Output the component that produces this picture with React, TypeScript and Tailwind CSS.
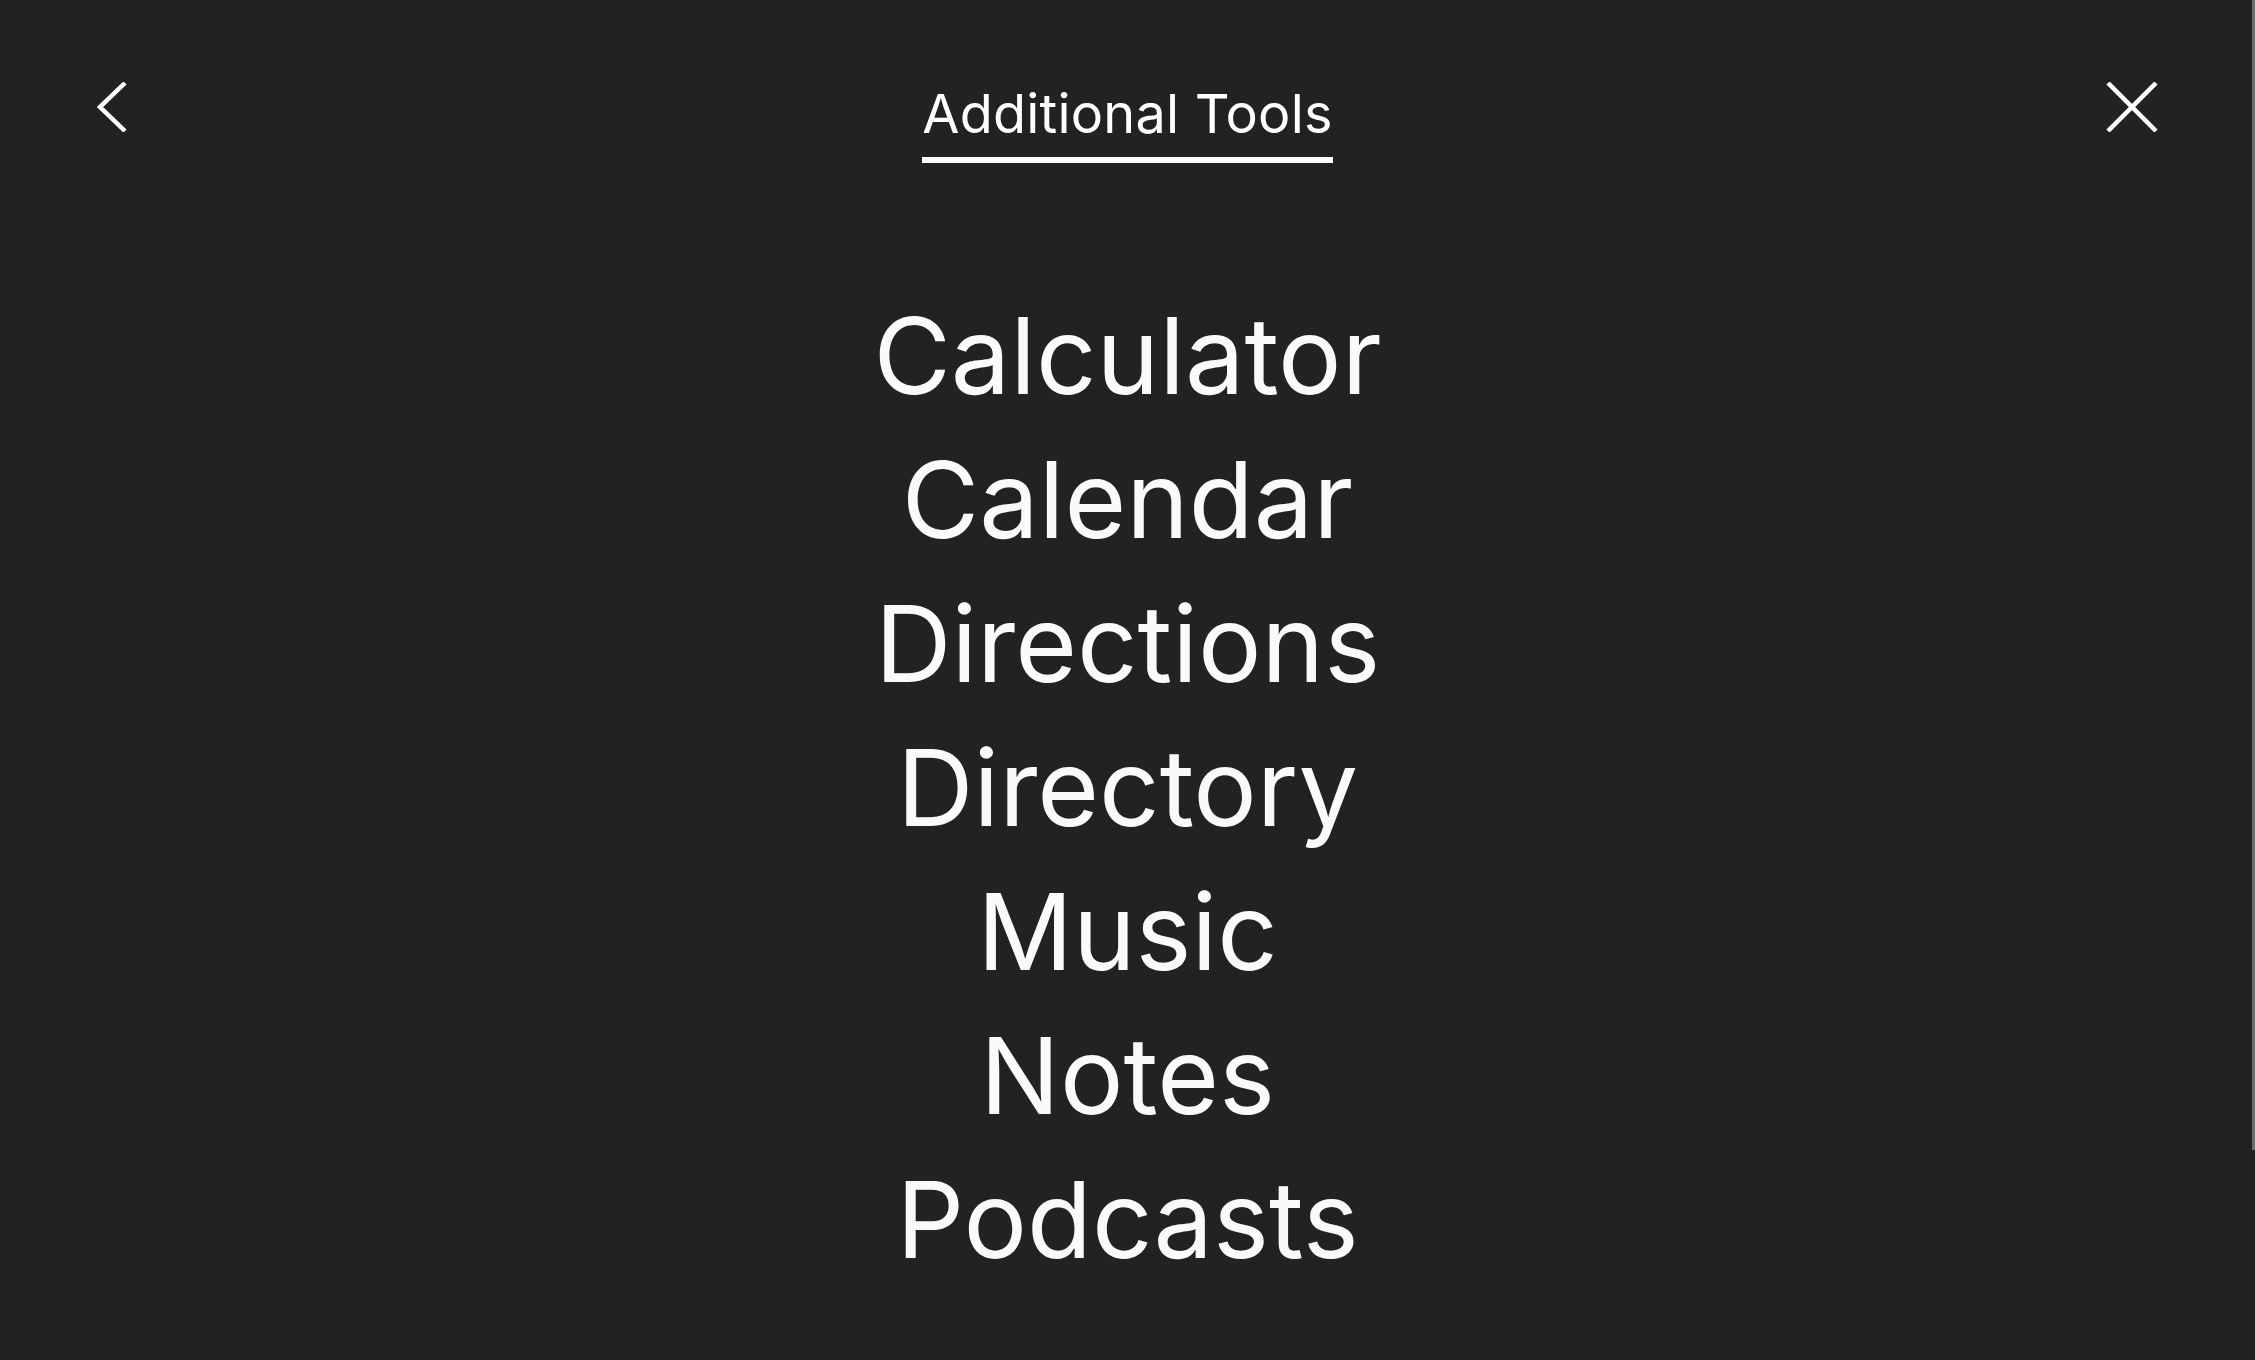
import React from "react";

const items = ["Calculator", "Calendar", "Directions", "Directory", "Music", "Notes", "Podcasts"];

export default function App() {
  return (
    <div
      className="relative h-screen w-full overflow-hidden bg-[#222222] text-[#fafafa]"
      style={{ fontFamily: "Inter, 'Noto Sans', sans-serif" }}
    >
      <header className="grid grid-cols-[1fr_auto_1fr] items-start px-[97px] pt-[82px]">
        <button className="justify-self-start" aria-label="Back">
          <svg width="30" height="50" viewBox="0 0 30 50" fill="none">
            <path d="M28 1 L3 25 L28 49" stroke="#ffffff" strokeWidth="4.5" strokeLinecap="butt" strokeLinejoin="miter" />
          </svg>
        </button>
        <h1 className="mt-[5px] inline-block border-b-[6px] border-white pb-[16px] text-[54px] leading-[54px] font-normal tracking-[0.2px] text-white">
          Additional Tools
        </h1>
        <button className="justify-self-end" aria-label="Close">
          <svg width="52" height="50" viewBox="0 0 52 50" fill="none">
            <path d="M2 1 L50 49 M50 1 L2 49" stroke="#ffffff" strokeWidth="4.5" />
          </svg>
        </button>
      </header>
      <ul className="mt-[121px] flex flex-col items-center">
        {items.map((t) => (
          <li key={t} className="text-[106px] leading-[144px] font-normal tracking-[0px] text-[#fafafa]">
            {t}
          </li>
        ))}
      </ul>
      <div className="absolute right-0 top-0 h-[1150px] w-[3px] bg-[#6e6e6e]" />
    </div>
  );
}
